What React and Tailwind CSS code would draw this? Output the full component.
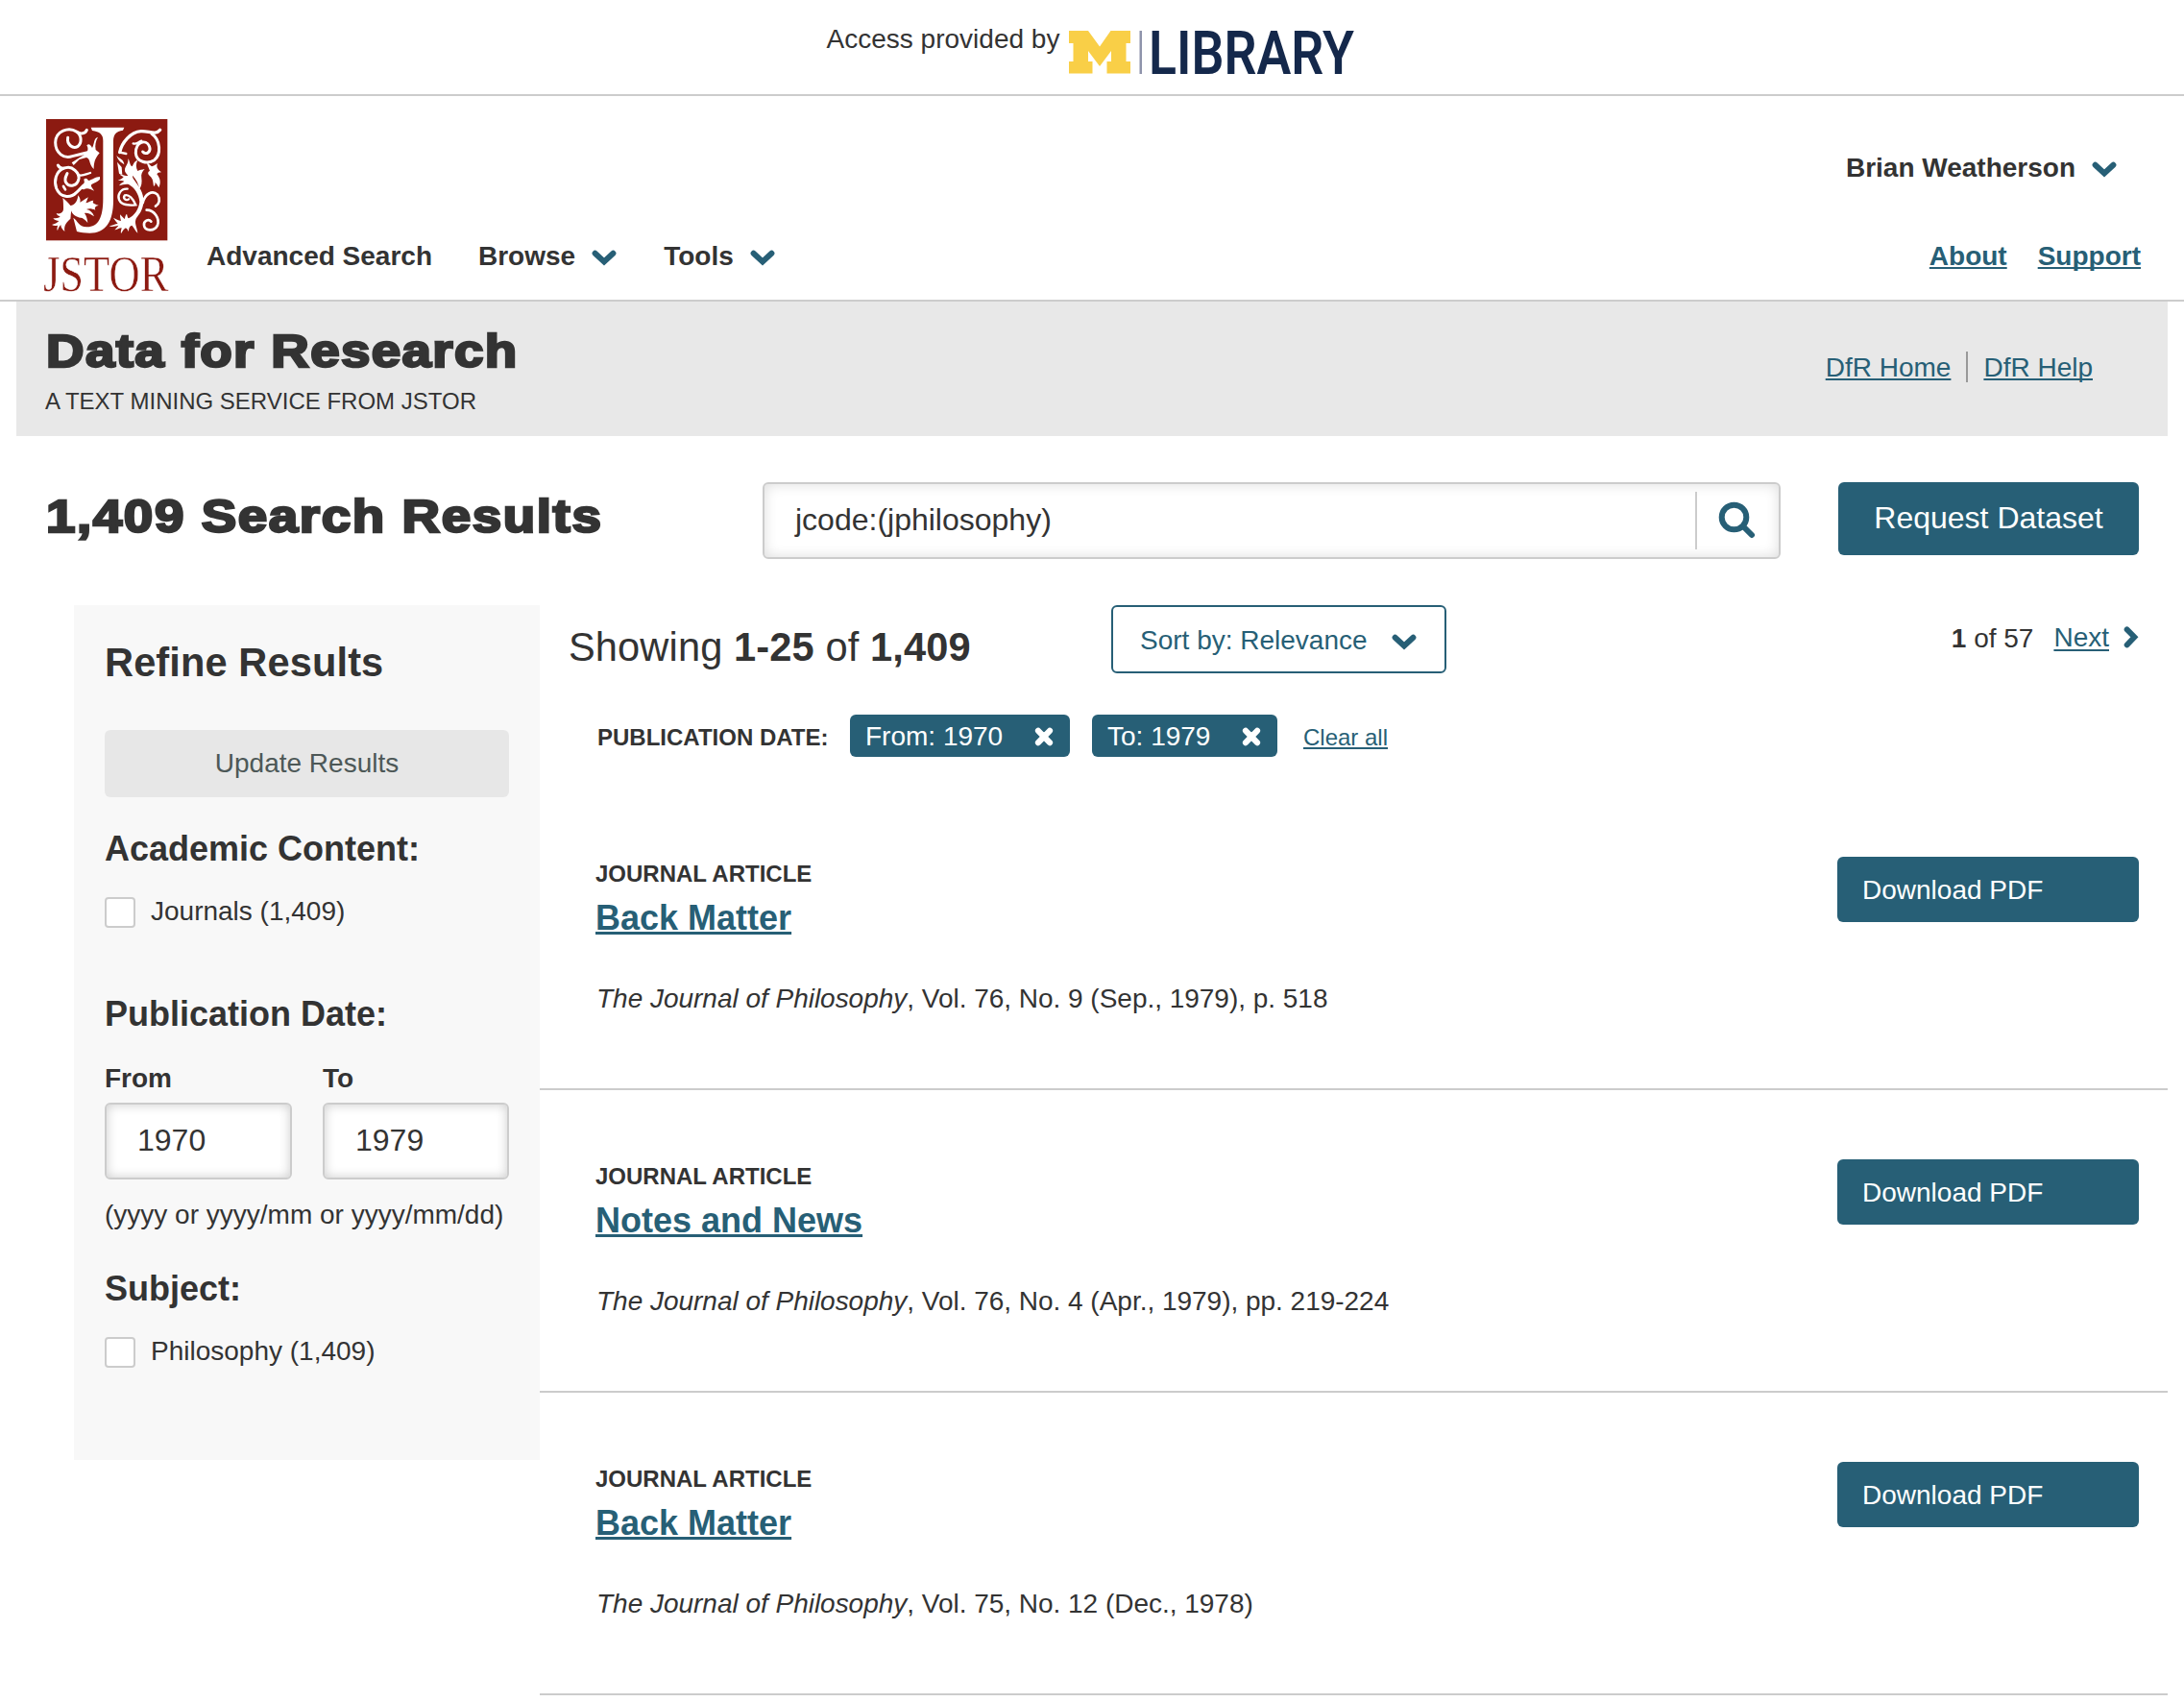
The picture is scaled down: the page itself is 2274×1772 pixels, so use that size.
const LINK = "text-[#275f76] underline decoration-2 underline-offset-[2px] [text-decoration-skip-ink:none]";

function ChevronDown({ className = "" }) {
  return (
    <svg className={"h-[17px] w-[26px] shrink-0 " + className} viewBox="0 0 26 17" fill="none">
      <path d="M3.6 3.8 13 12.4 22.4 3.8" stroke="#275f76" strokeWidth="6" strokeLinecap="round" />
    </svg>
  );
}

function CloseIcon({ className = "" }) {
  return (
    <svg className={"h-5 w-5 shrink-0 " + className} viewBox="0 0 20 20" fill="none">
      <path d="M4 3.8 16 16.2M16 3.8 4 16.2" stroke="#fff" strokeWidth="6.2" strokeLinecap="round" />
    </svg>
  );
}

function LibraryLogo() {
  return (
    <svg className="h-[62px] w-[300px] shrink-0 overflow-visible" viewBox="0 0 300 62">
      <path
        fill="#f9cf47"
        d="M0 10H20L32 26.500 43.500 10H64V23H59.500V42H64V54.500H39.500V42H44V31L32 47 20 31V42H24.500V54.500H0V42H4.500V23H0Z"
      />
      <rect x="73.500" y="10" width="2.500" height="45" fill="#8e93ab" />
      <text
        x="83"
        y="55"
        fontFamily="Roboto"
        fontWeight="600"
        fontSize="63"
        fill="#14284b"
        textLength="214"
        lengthAdjust="spacingAndGlyphs"
      >
        LIBRARY
      </text>
    </svg>
  );
}

function JstorLogo() {
  return (
    <svg className="h-[190px] w-[130px] shrink-0 overflow-visible" viewBox="0 0 390 570">
      <g transform="translate(-45 -42)">
        <rect x="54" y="42" width="379" height="379" fill="#8c1a11" />
        <g fill="#fff">
          <path d="M194 68H298L294 77C272 80 264 90 264 112V296C264 362 240 398 190 398C176 398 162 397 150 393L139 350C152 358 156 380 182 379C217 378 232 350 232 290V110C232 90 222 81 198 78Z" />
          <path d="M216 98C201 104 207 114 198 132C192 120 187 118 181 124C188 136 184 146 172 154L134 178L140 186L158 168L180 162C194 166 186 182 203 198C203 182 205 166 221 148L209 138C206 124 209 110 216 98Z" />
          <path d="M222 222C208 222 198 232 186 234C182 226 176 226 172 230C176 240 172 250 160 260L172 262C180 256 190 258 204 266C198 256 192 252 196 246C206 240 214 238 222 230Z" />
          <path d="M106 288C116 296 124 304 130 312C144 312 152 298 154 280C160 288 162 294 160 302C168 298 174 292 186 286C182 292 182 298 178 304C188 302 194 296 202 296C198 302 200 306 218 311C208 314 204 318 208 326C198 322 188 320 180 324C192 326 200 334 204 346C194 340 184 334 174 336C180 344 182 352 184 366C176 356 168 350 162 350C156 350 148 346 142 342C136 336 134 336 134 328C130 336 132 346 130 354C122 360 108 372 112 393C104 386 100 380 100 372C94 378 92 384 90 390C86 386 90 378 90 374C84 376 78 376 72 372C80 370 90 366 94 360C88 360 80 358 76 352C84 352 94 352 98 346C92 344 88 342 86 336C98 340 108 334 108 322C108 310 108 298 106 288Z" />
          <path d="M274 156C282 166 296 166 298 184C290 178 280 174 274 156ZM276 176 290 192 292 216 282 212Z" />
          <path d="M310 166C316 172 314 184 322 190C328 184 326 176 340 170C334 182 334 192 340 204C346 200 354 200 362 198C354 206 350 214 352 226C354 240 352 252 346 260C342 244 336 230 324 218C322 226 334 236 344 254C360 274 362 306 352 326C346 340 336 348 334 356C330 368 338 380 340 398C332 390 328 380 322 374C314 376 312 384 312 394C308 386 304 380 300 384C294 388 292 394 288 400C286 392 290 386 290 382C282 382 276 388 268 388C274 382 278 378 280 374C270 376 260 380 251 376C262 374 270 370 278 368C272 362 268 356 264 350C272 354 280 358 288 360C286 352 284 346 286 340C290 346 296 352 300 354C300 348 302 342 306 338C308 344 308 350 312 352C330 344 344 322 346 300C344 276 330 256 312 246C302 244 292 248 282 250C286 242 294 240 298 236C292 234 284 234 278 234C288 230 294 226 296 222C290 220 286 218 284 214C294 216 302 222 310 218C304 212 298 206 300 198C302 190 312 180 310 166Z" />
          <path d="M369 178C376 182 380 188 384 190C390 188 396 184 402 180C398 190 400 198 414 208C406 208 402 210 400 214C410 226 414 240 406 256C402 248 398 242 394 240C396 246 394 250 390 252C388 238 388 228 378 220C370 212 372 206 378 204C376 196 370 188 369 178Z" />
        </g>
        <g fill="none" stroke="#fff" strokeWidth="9" strokeLinecap="round">
          <path d="M181 76C176 88 162 90 150 82C124 64 84 80 83 115C83 148 110 168 136 158C150 154 164 150 184 146" />
          <path d="M150 82C166 94 166 118 152 128C138 136 118 122 122 100" />
          <path d="M91 186C96 196 104 198 116 194C136 188 158 210 156 228C152 252 126 256 116 240C110 230 116 220 120 212" />
          <path d="M108 196C84 206 78 236 86 258C98 288 130 290 148 272C162 260 166 250 184 240" />
          <path d="M154 216C166 222 178 214 192 210" strokeWidth="7" />
          <path d="M108 252 114 262" strokeWidth="8" />
          <path d="M284 146C290 116 318 82 350 80C374 78 396 94 410 76" strokeWidth="10" />
          <path d="M284 146 304 150" strokeWidth="7" />
          <path d="M384 88C412 108 414 152 392 170C370 184 336 176 334 148C334 112 366 104 376 126C384 144 366 156 356 144" />
          <path d="M326 118C336 122 340 114 352 110" strokeWidth="7" />
          <path d="M308 260C286 258 276 280 282 294C290 312 312 312 334 310C326 290 312 276 300 280C292 290 304 298 312 292" strokeWidth="7" />
          <path d="M356 304C362 276 386 262 402 278C412 292 408 306 396 314" strokeWidth="8" />
          <path d="M368 326C392 326 410 352 402 374C392 394 362 392 360 374C358 360 374 352 382 362" strokeWidth="8" />
        </g>
        <text
          x="45"
          y="579"
          fontFamily="Liberation Serif"
          fontWeight="400"
          fontSize="158"
          fill="#8c1a11"
          stroke="#fff"
          strokeWidth="1.5"
          textLength="391"
          lengthAdjust="spacingAndGlyphs"
        >
          JSTOR
        </text>
      </g>
    </svg>
  );
}

function TopBar() {
  return (
    <div className="flex h-[100px] items-start justify-center border-b-2 border-[#ccc]">
      <span className="mt-[25px] mr-[10px] text-[28px] leading-[31px]">Access provided by</span>
      <div className="mt-[22px] flex">
        <LibraryLogo />
      </div>
    </div>
  );
}

function Header() {
  return (
    <header className="flex h-[214px] justify-between border-b-2 border-[#ccc] pr-[45px] pl-[45px] text-[28px] leading-[31px] font-bold">
      <div className="flex">
        <div className="mt-6 flex h-[182px]">
          <JstorLogo />
        </div>
        <nav className="mt-[151px] ml-10 flex items-start">
          <span>Advanced Search</span>
          <span className="ml-[48px]">Browse</span>
          <ChevronDown className="mt-[9px] ml-[17px]" />
          <span className="ml-[49px]">Tools</span>
          <ChevronDown className="mt-[9px] ml-[17px]" />
        </nav>
      </div>
      <div className="flex flex-col items-end">
        <div className="mt-[59px] mr-[25px] flex items-start">
          <span>Brian Weatherson</span>
          <ChevronDown className="mt-[9px] ml-[17px]" />
        </div>
        <div className="mt-[61px] flex gap-8">
          <a className={LINK}>About</a>
          <a className={LINK}>Support</a>
        </div>
      </div>
    </header>
  );
}

function Banner() {
  return (
    <section className="mx-[17px] flex h-[140px] justify-between bg-[#e8e8e8] pr-[78px] pl-[30px]">
      <div>
        <h1 className="mt-[25px] ml-px w-[500px] origin-left scale-x-[1.14] text-[48px] leading-[53px] font-bold tracking-[1.2px] whitespace-nowrap [-webkit-text-stroke:2.5px_#333]">
          Data for Research
        </h1>
        <p className="mt-[12px] text-[24px] leading-[27px]">A TEXT MINING SERVICE FROM JSTOR</p>
      </div>
      <div className="mt-[52px] flex items-start text-[28px] leading-[31px]">
        <a className={LINK + " mt-px"}>DfR Home</a>
        <span className="mx-4 h-8 w-[2px] bg-[#999]" />
        <a className={LINK + " mt-px"}>DfR Help</a>
      </div>
    </section>
  );
}

function SearchRow() {
  return (
    <section className="mt-12 flex h-20 items-start pl-[48px]">
      <h2 className="mt-[9px] w-[746px] origin-left scale-x-[1.14] text-[48px] leading-[53px] font-bold tracking-[1.4px] whitespace-nowrap [-webkit-text-stroke:2.5px_#333]">
        1,409 Search Results
      </h2>
      <div className="flex h-20 w-[1060px] items-center rounded-md border-2 border-[#ccc] bg-white shadow-[inset_0_0_14px_rgba(0,0,0,0.14)]">
        <span className="ml-8 grow pb-[2px] text-[32px] leading-[36px]">jcode:(jphilosophy)</span>
        <span className="h-[60px] w-[2px] bg-[#ccc]" />
        <svg className="mr-[24px] mb-[2px] ml-[22px] h-[39px] w-[39px]" viewBox="0 0 39 39" fill="none">
          <circle cx="16.500" cy="16.500" r="12.800" stroke="#275f76" strokeWidth="6" />
          <path d="M26 26 35 35" stroke="#275f76" strokeWidth="6" strokeLinecap="round" />
        </svg>
      </div>
      <button className="ml-[60px] h-[76px] w-[313px] rounded-md bg-[#275f76] pb-[2px] text-[32px] leading-[36px] text-white">
        Request Dataset
      </button>
    </section>
  );
}

function CheckRow({ label }) {
  return (
    <label className="mt-[29px] flex h-[33px] items-start">
      <span className="mt-px mr-4 h-8 w-8 shrink-0 rounded-[4px] border-2 border-[#ccc] bg-white" />
      <span className="text-[28px] leading-[31px]">{label}</span>
    </label>
  );
}

function YearField({ label, value, className }) {
  return (
    <div className={className}>
      <div className="text-[28px] leading-[31px] font-bold">{label}</div>
      <div className="mt-[10px] flex h-20 rounded-md border-2 border-[#ccc] bg-white pt-[19px] pl-8 text-[32px] leading-[36px] shadow-[inset_0_0_12px_rgba(0,0,0,0.2)]">
        {value}
      </div>
    </div>
  );
}

function Sidebar() {
  return (
    <aside className="h-[890px] w-[485px] shrink-0 bg-[#f8f8f8] px-8 pt-[36px]">
      <h3 className="text-[41.6px] leading-[47px] font-bold tracking-[0.1px]">Refine Results</h3>
      <button className="mt-[47px] flex h-[70px] w-full justify-center rounded-md bg-[#e7e7e7] pt-[19px] text-[28px] leading-[31px] text-[#4d5857]">
        Update Results
      </button>
      <h4 className="mt-[33px] text-[36px] leading-[41px] font-bold">Academic Content:</h4>
      <CheckRow label="Journals (1,409)" />
      <h4 className="mt-[69px] text-[36px] leading-[41px] font-bold">Publication Date:</h4>
      <div className="mt-[31px] flex justify-between">
        <YearField label="From" value="1970" className="w-[195px]" />
        <YearField label="To" value="1979" className="w-[194px]" />
      </div>
      <p className="mt-[21px] text-[28px] leading-[31px] whitespace-nowrap">(yyyy or yyyy/mm or yyyy/mm/dd)</p>
      <h4 className="mt-[41px] text-[36px] leading-[41px] font-bold">Subject:</h4>
      <CheckRow label="Philosophy (1,409)" />
    </aside>
  );
}

function Chip({ label, className }) {
  return (
    <span className={"flex h-11 items-start rounded-md bg-[#275f76] pl-4 text-white " + className}>
      <span className="mt-[7px] grow text-[28px] leading-[31px]">{label}</span>
      <CloseIcon className="mt-[13px] mr-[17px]" />
    </span>
  );
}

function Article({ title, rest }) {
  return (
    <article className="flex h-[315px] items-start justify-between border-b-2 border-[#ccc] pr-[30px] pl-[58px]">
      <div className="pt-[76px]">
        <div className="text-[24px] leading-[27px] font-bold">JOURNAL ARTICLE</div>
        <a className="mt-3 block text-[36px] leading-[41px] font-bold text-[#275f76] underline decoration-[3px] underline-offset-[2px] [text-decoration-skip-ink:none]">
          {title}
        </a>
        <p className="mt-[48px] pl-px text-[28px] leading-[31px] tracking-[-0.02px]">
          <i>The Journal of Philosophy</i>
          {rest}
        </p>
      </div>
      <button className="mt-[72px] flex h-[68px] w-[314px] rounded-md bg-[#275f76] pt-[19px] pl-[26px] text-[28px] leading-[31px] text-white">
        Download PDF
      </button>
    </article>
  );
}

const ARTICLES = [
  { title: "Back Matter", rest: ", Vol. 76, No. 9 (Sep., 1979), p. 518" },
  { title: "Notes and News", rest: ", Vol. 76, No. 4 (Apr., 1979), pp. 219-224" },
  { title: "Back Matter", rest: ", Vol. 75, No. 12 (Dec., 1978)" },
];

function Results() {
  return (
    <main className="w-[1695px]">
      <div className="flex h-[114px] items-start pr-[30px] pl-[30px]">
        <div className="mt-[20px] w-[565px] text-[41.6px] leading-[47px] tracking-[0.12px]">
          Showing <b>1-25</b> of <b>1,409</b>
        </div>
        <button className="flex h-[71px] w-[349px] items-start rounded-md border-2 border-[#275f76] pt-[19px] pl-[28px] text-[28px] leading-[31px] text-[#275f76]">
          Sort by: Relevance
          <ChevronDown className="mt-[9px] ml-[25px]" />
        </button>
        <div className="mt-[19px] ml-auto flex items-start text-[28px] leading-[31px]">
          <span>
            <b>1</b> of 57
          </span>
          <a className="-mt-px ml-[21px] text-[#275f76] underline decoration-2 underline-offset-[3px]">Next</a>
          <svg className="mt-[3px] ml-[15px] h-[23px] w-4" viewBox="0 0 16 23" fill="none">
            <path d="M3.600 3.400 11.400 11.300 3.600 19.400" stroke="#275f76" strokeWidth="5.800" strokeLinecap="round" />
          </svg>
        </div>
      </div>
      <div className="flex h-[76px] items-start pl-[60px]">
        <span className="mt-[10px] w-[263px] text-[24px] leading-[27px] font-bold">PUBLICATION DATE:</span>
        <Chip label="From: 1970" className="w-[229px]" />
        <Chip label="To: 1979" className="ml-[23px] w-[193px]" />
        <a className={LINK + " mt-[10px] ml-[27px] text-[24px] leading-[27px]"}>Clear all</a>
      </div>
      {ARTICLES.map((a, i) => (
        <Article key={i} {...a} />
      ))}
    </main>
  );
}

export default function App() {
  return (
    <div className="h-[1772px] w-[2274px] overflow-hidden bg-white font-['Liberation_Sans',Arial,sans-serif] text-[#333]">
      <TopBar />
      <Header />
      <Banner />
      <SearchRow />
      <div className="mt-12 flex pl-[77px]">
        <Sidebar />
        <Results />
      </div>
    </div>
  );
}
